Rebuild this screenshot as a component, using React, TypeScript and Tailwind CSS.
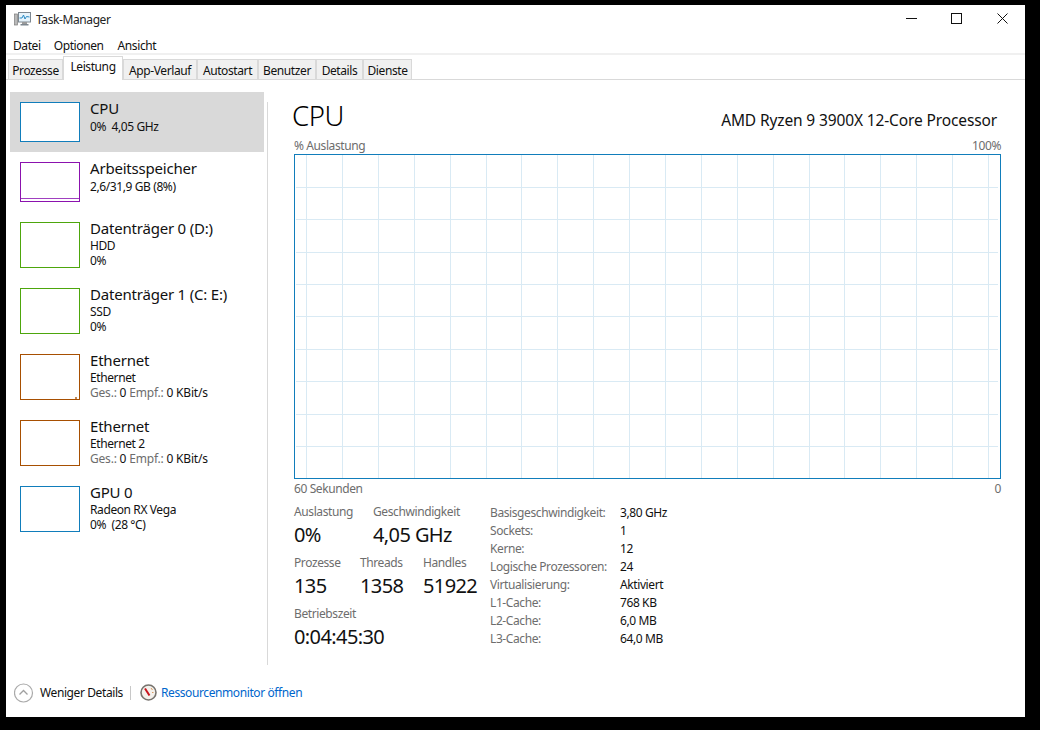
import React from 'react';

type Device = {
  name: string;
  lines: React.ReactNode[];
  color: string;
  tall?: boolean;
  selected?: boolean;
  extra?: React.ReactNode;
};

const gray = (s: string) => <span className="text-[#6d6d6d]">{s}</span>;

const netLine = (
  <span className="tracking-[-0.2px]">
    {gray('Ges.:')} 0 {gray('Empf.:')} 0 KBit/s
  </span>
);

const devices: Device[] = [
  { name: 'CPU', lines: ['0%  4,05 GHz'], color: 'border-[#117dbb]', selected: true },
  {
    name: 'Arbeitsspeicher',
    lines: ['2,6/31,9 GB (8%)'],
    color: 'border-[#8b12ae]',
    extra: <div className="absolute bottom-[2px] left-0 right-0 h-px bg-[#a040c0]" />,
  },
  { name: 'Datenträger 0 (D:)', lines: ['HDD', '0%'], color: 'border-[#4da60c]', tall: true },
  { name: 'Datenträger 1 (C: E:)', lines: ['SSD', '0%'], color: 'border-[#4da60c]', tall: true },
  {
    name: 'Ethernet',
    lines: ['Ethernet', netLine],
    color: 'border-[#a74f01]',
    tall: true,
    extra: <div className="absolute bottom-0 right-[2px] w-[2px] h-[2px] bg-[#c08a5a]" />,
  },
  {
    name: 'Ethernet',
    lines: ['Ethernet 2', netLine],
    color: 'border-[#a74f01]',
    tall: true,
  },
  { name: 'GPU 0', lines: ['Radeon RX Vega', '0%  (28 °C)'], color: 'border-[#117dbb]', tall: true },
];

const tabs = [
  { label: 'Prozesse', w: 'w-[55px]' },
  { label: 'Leistung', w: 'w-[60px]', active: true },
  { label: 'App-Verlauf', w: 'w-[74px]' },
  { label: 'Autostart', w: 'w-[61px]' },
  { label: 'Benutzer', w: 'w-[58px]' },
  { label: 'Details', w: 'w-[47px]' },
  { label: 'Dienste', w: 'w-[49px]' },
];

const specs = [
  ['Basisgeschwindigkeit:', '3,80 GHz'],
  ['Sockets:', '1'],
  ['Kerne:', '12'],
  ['Logische Prozessoren:', '24'],
  ['Virtualisierung:', 'Aktiviert'],
  ['L1-Cache:', '768 KB'],
  ['L2-Cache:', '6,0 MB'],
  ['L3-Cache:', '64,0 MB'],
];

const gridX = [12, 48, 84, 120, 156, 192, 227, 263, 299, 335, 371, 407, 443, 479, 515, 550, 586, 622, 658, 694];
const gridY = [33, 65, 98, 130, 162, 195, 227, 260, 292];

function AppIcon() {
  return (
    <svg width="17" height="16" viewBox="0 0 17 16">
      <rect x="0.5" y="3" width="3" height="11" fill="#b9b9b9" stroke="#7d7d7d" strokeWidth="0.7" />
      <rect x="4.5" y="1.5" width="12" height="9.5" fill="#e6f3fb" stroke="#7d8790" />
      <path d="M5.5 7 L8 7 L9.5 4 L11 8 L12.5 5.5 L15.5 6" fill="none" stroke="#2a8ac4" strokeWidth="1" />
      <rect x="8" y="11" width="5" height="2" fill="#9a9a9a" />
      <rect x="6.5" y="13" width="8" height="1.5" fill="#7d8790" />
    </svg>
  );
}

function WindowControls() {
  return (
    <div className="flex items-center">
      <svg width="11" height="11" viewBox="0 0 11 11" className="mr-[34px]">
        <path d="M0 5.5H11" stroke="#111" strokeWidth="1" />
      </svg>
      <svg width="11" height="11" viewBox="0 0 11 11" className="mr-[35px]">
        <rect x="0.5" y="0.5" width="10" height="10" fill="none" stroke="#111" />
      </svg>
      <svg width="11" height="11" viewBox="0 0 11 11" className="mr-[17px]">
        <path d="M0.5 0.5L10.5 10.5M10.5 0.5L0.5 10.5" stroke="#111" strokeWidth="1" />
      </svg>
    </div>
  );
}

function ResmonIcon() {
  return (
    <svg width="17" height="17" viewBox="0 0 17 17">
      <circle cx="8.5" cy="8.5" r="7.5" fill="#f4f1ec" stroke="#77736e" strokeWidth="1.6" />
      <path d="M5 4.5L9.5 11.5" stroke="#c8141e" strokeWidth="2" />
      <path d="M11 4L12.5 6M13.5 8.5H12" stroke="#d99a62" strokeWidth="1" />
    </svg>
  );
}

function Sidebar() {
  return (
    <div className="w-[254px] ml-[4px] pt-[12px]">
      {devices.map((d, i) => (
        <div
          key={i}
          className={`flex gap-[10px] pl-[10px] pt-[10px] ${d.tall ? 'h-[66px]' : 'h-[60px]'} ${d.selected ? 'bg-[#d9d9d9]' : ''}`}
        >
          <div className={`relative w-[60px] shrink-0 border bg-white ${d.color} ${d.tall ? 'h-[46px]' : 'h-[40px]'}`}>
            {d.extra}
          </div>
          <div className="mt-[-4px] whitespace-pre">
            <div className={`text-[15px] tracking-[-0.2px] text-[#111] ${d.tall ? 'leading-[20px]' : 'leading-[20.5px]'}`}>
              {d.name}
            </div>
            {d.lines.map((l, j) => (
              <div key={j} className="text-[12px] leading-[15px] text-[#111]">
                {l}
              </div>
            ))}
          </div>
        </div>
      ))}
    </div>
  );
}

function Chart() {
  return (
    <div className="h-[325px] border border-[#117dbb]">
      <svg width="705" height="323" className="block">
        {gridX.map((x) => (
          <line key={x} x1={x - 0.5} x2={x - 0.5} y1="0" y2="323" stroke="#d9eaf4" />
        ))}
        {gridY.map((y) => (
          <line key={y} x1="1" x2="703" y1={y - 0.5} y2={y - 0.5} stroke="#d9eaf4" />
        ))}
      </svg>
    </div>
  );
}

function Stat({ label, value, w }: { label: string; value: string; w: string }) {
  return (
    <div className={w}>
      <div className="text-[12px] leading-[16px] text-[#6d6d6d]">{label}</div>
      <div className="text-[20px] leading-[28px] mt-[1px] tracking-[-0.6px] text-[#111]">{value}</div>
    </div>
  );
}

export default function App() {
  return (
    <div className="w-[1040px] h-[730px] bg-black pt-[5px] pl-[6px] overflow-hidden font-['Noto_Sans',sans-serif] tracking-[-0.4px]">
      <div className="w-[1019px] h-[712px] bg-white flex flex-col">
        <div className="h-[27px] flex items-center justify-between">
          <div className="flex items-center pl-[8px] gap-[5px] text-[12px] text-[#222]">
            <AppIcon />
            <span className="pt-[2px]">Task-Manager</span>
          </div>
          <WindowControls />
        </div>
        <div className="h-[23px] pt-[7px] flex items-center gap-[13px] pl-[7px] text-[12px] text-[#111] border-b-2 border-[#f0f0f0]">
          <span>Datei</span>
          <span>Optionen</span>
          <span className="ml-px">Ansicht</span>
        </div>
        <div className="h-[25px] flex items-end pl-[2px] border-b border-[#d9d9d9]">
          {tabs.map((t) =>
            t.active ? (
              <div
                key={t.label}
                className={`${t.w} h-[24px] -mb-px border border-b-0 border-[#d9d9d9] bg-white text-center text-[12px] leading-[20px] text-[#111] relative`}
              >
                {t.label}
              </div>
            ) : (
              <div
                key={t.label}
                className={`${t.w} h-[20px] border-l border-r border-t border-[#d9d9d9] bg-[#f0f0f0] text-center text-[12px] leading-[21px] text-[#111]`}
              >
                {t.label}
              </div>
            ),
          )}
        </div>

        <div className="flex flex-1">
          <Sidebar />
          <div className="w-px h-[563px] mt-[22px] ml-[3px] bg-[#d9d9d9]" />
          <div className="ml-[24px] w-[709px]">
            <div className="h-[58px] flex items-end justify-between pr-[4px] pb-[3px]">
              <span className="text-[27.5px] leading-[38px] font-light text-black">CPU</span>
              <span className="text-[15.5px] leading-[20px] tracking-[-0.13px] text-[#111] mb-[5px]">AMD Ryzen 9 3900X 12-Core Processor</span>
            </div>
            <div className="ml-[2px] w-[707px]">
              <div className="flex justify-between text-[12px] leading-[16px] text-[#6d6d6d]">
                <span>% Auslastung</span>
                <span>100%</span>
              </div>
              <Chart />
              <div className="flex justify-between mt-[2px] text-[12px] leading-[16px] text-[#6d6d6d]">
                <span>60 Sekunden</span>
                <span>0</span>
              </div>
              <div className="flex mt-[7px]">
                <div className="w-[196px]">
                  <div className="flex">
                    <Stat label="Auslastung" value="0%" w="w-[79px]" />
                    <Stat label="Geschwindigkeit" value="4,05 GHz" w="w-[110px]" />
                  </div>
                  <div className="flex mt-[6px]">
                    <Stat label="Prozesse" value="135" w="w-[66px]" />
                    <Stat label="Threads" value="1358" w="w-[63px]" />
                    <Stat label="Handles" value="51922" w="w-[60px]" />
                  </div>
                  <div className="mt-[6px]">
                    <Stat label="Betriebszeit" value="0:04:45:30" w="w-[120px]" />
                  </div>
                </div>
                <div className="text-[12px] leading-[18px]">
                  {specs.map(([k, v]) => (
                    <div key={k} className="flex">
                      <span className="w-[130px] text-[#6d6d6d]">{k}</span>
                      <span className="text-[#111]">{v}</span>
                    </div>
                  ))}
                </div>
              </div>
            </div>
          </div>
        </div>

        <div className="h-[45px] flex items-center pl-[8px] pb-[4px] text-[12px]">
          <svg width="20" height="20" viewBox="0 0 20 20">
            <circle cx="9.5" cy="10" r="9" fill="none" stroke="#aaaaaa" strokeWidth="1.2" />
            <path d="M5.5 11.5L9.5 7.5L13.5 11.5" fill="none" stroke="#a0a0a0" strokeWidth="1.3" />
          </svg>
          <span className="ml-[6px] text-[#111]">Weniger Details</span>
          <div className="w-px h-[14px] bg-[#c8c8c8] ml-[7px] mr-[9px]" />
          <ResmonIcon />
          <span className="ml-[4px] text-[#0066cc]">Ressourcenmonitor öffnen</span>
        </div>
      </div>
    </div>
  );
}
